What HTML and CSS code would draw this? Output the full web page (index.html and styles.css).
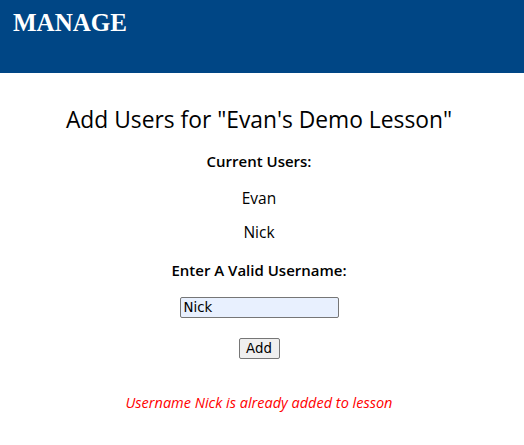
FILE: index.html
```
<!DOCTYPE html>
<html>
<head>
<meta charset="utf-8">
<link rel="stylesheet" href="styles.css">
</head>
<body>
<header class="topbar">
  <h1 class="brand">MANAGE</h1>
</header>
<main class="content">
  <h2 class="title">Add Users for "Evan's Demo Lesson"</h2>
  <p class="label">Current Users:</p>
  <p class="user user-first">Evan</p>
  <p class="user">Nick</p>
  <p class="label label-enter">Enter A Valid Username:</p>
  <div class="field-row"><input class="field" type="text" value="Nick"></div>
  <div class="btn-row"><button class="btn" type="button">Add</button></div>
  <p class="error">Username Nick is already added to lesson</p>
</main>
</body>
</html>
```
FILE: styles.css
```
html, body {
  margin: 0;
  padding: 0;
  background: #ffffff;
}
body {
  font-family: "Open Sans", "Noto Sans", sans-serif;
  color: #000;
}
.topbar {
  background: #004685;
  height: 73px;
  box-sizing: border-box;
  padding: 9px 13px 0;
}
.brand {
  margin: 0;
  font-family: "Liberation Serif", "Times New Roman", serif;
  font-weight: bold;
  font-size: 25px;
  line-height: 28px;
  color: #ffffff;
}
.content {
  display: flex;
  flex-direction: column;
  align-items: center;
  padding: 31px 6px 0 0;
}
.title {
  margin: 0;
  font-weight: 400;
  font-size: 22.8px;
  line-height: 32px;
}
.label {
  margin: 14px 0 0;
  font-weight: 600;
  font-size: 15px;
  line-height: 22px;
}
.user {
  margin: 12px 0 0;
  font-size: 15.5px;
  line-height: 22px;
}
.user-first {
  margin-top: 15px;
}
.label-enter {
  margin-top: 16px;
}
.field-row {
  margin-top: 16px;
  display: flex;
}
.field {
  width: 159px;
  height: 21px;
  box-sizing: border-box;
  margin: 0;
  padding: 1px 3px;
  font-family: "DejaVu Sans", Verdana, sans-serif;
  font-size: 13.33px;
  background: #e8f0fe;
  border: 1px solid #767676;
  border-radius: 2px;
  color: #000;
}
.btn-row {
  margin-top: 20px;
  display: flex;
}
.btn {
  width: 41px;
  height: 21px;
  box-sizing: border-box;
  margin: 0;
  padding: 0;
  font-family: "DejaVu Sans", Verdana, sans-serif;
  font-size: 13.33px;
  background: #efefef;
  border: 1px solid #767676;
  border-radius: 2px;
  color: #000;
}
.error {
  margin: 34px 0 0;
  font-style: italic;
  font-size: 14.5px;
  line-height: 20px;
  color: #ff0000;
}
```
